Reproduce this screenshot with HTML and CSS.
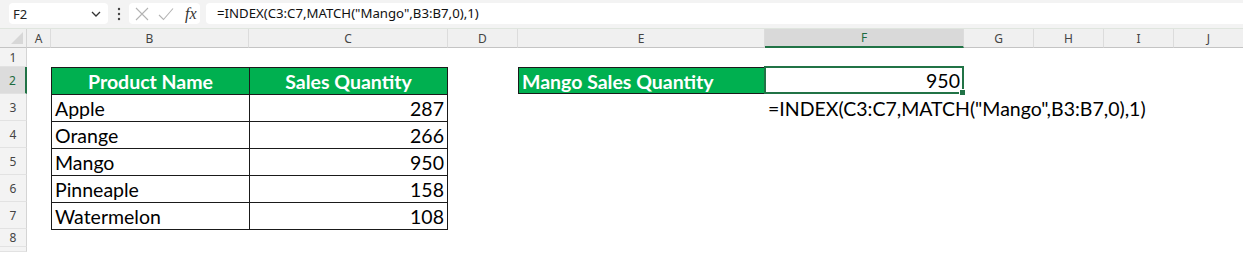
FILE: index.html
```html
<!DOCTYPE html>
<html lang="en">

<head>
    <meta charset="UTF-8">
    <meta name="viewport" content="width=device-width, initial-scale=1.0">
    <title>INDEX MATCH - Mango</title>
    <link rel="stylesheet" href="styles.css">
</head>

<body>
    <div class="app">
        <!-- formula bar -->
        <div class="formula-bar">
            <div class="name-box">
                <span>F2</span>
                <svg class="chevron" width="10" height="6" viewBox="0 0 10 6">
                    <path d="M1 1 L5 5 L9 1" fill="none" stroke="#333" stroke-width="1.3" />
                </svg>
            </div>
            <svg class="dots" width="4" height="14" viewBox="0 0 4 14">
                <circle cx="2" cy="2" r="1.2" fill="#444" />
                <circle cx="2" cy="7" r="1.2" fill="#444" />
                <circle cx="2" cy="12" r="1.2" fill="#444" />
            </svg>
            <div class="fx-box">
                <svg width="14" height="14" viewBox="0 0 14 14">
                    <path d="M1 1 L13 13 M13 1 L1 13" stroke="#b3b3b3" stroke-width="1.1" fill="none" />
                </svg>
                <svg width="16" height="14" viewBox="0 0 16 14">
                    <path d="M1 8 L5.5 12.5 L15 1.5" stroke="#b3b3b3" stroke-width="1.1" fill="none" />
                </svg>
                <span class="fx">fx</span>
            </div>
            <div class="formula-input">=INDEX(C3:C7,MATCH("Mango",B3:B7,0),1)</div>
        </div>

        <!-- sheet -->
        <div class="sheet">
            <div class="corner"></div>
            <div class="col-head">A</div>
            <div class="col-head">B</div>
            <div class="col-head">C</div>
            <div class="col-head">D</div>
            <div class="col-head">E</div>
            <div class="col-head active">F</div>
            <div class="col-head">G</div>
            <div class="col-head">H</div>
            <div class="col-head">I</div>
            <div class="col-head last">J</div>

            <div class="row-head">1</div>
            <div class="row-head active">2</div>
            <div class="row-head">3</div>
            <div class="row-head">4</div>
            <div class="row-head">5</div>
            <div class="row-head">6</div>
            <div class="row-head">7</div>
            <div class="row-head">8</div>
            <div class="row-head"></div>

            <div class="data-table">
                <div class="cell head">Product Name</div>
                <div class="cell head">Sales Quantity</div>
                <div class="cell">Apple</div>
                <div class="cell num">287</div>
                <div class="cell">Orange</div>
                <div class="cell num">266</div>
                <div class="cell">Mango</div>
                <div class="cell num">950</div>
                <div class="cell">Pinneaple</div>
                <div class="cell num">158</div>
                <div class="cell">Watermelon</div>
                <div class="cell num">108</div>
            </div>

            <div class="lookup-label">Mango Sales Quantity</div>
            <div class="lookup-value">950<span class="fill-handle"></span></div>
            <div class="formula-note">=INDEX(C3:C7,MATCH("Mango",B3:B7,0),1)</div>
        </div>
    </div>
</body>

</html>
```

FILE: styles.css
```css
html, body {
    margin: 0;
    padding: 0;
    background: #fff;
}

.app {
    width: 1243px;
    height: 253px;
    overflow: hidden;
    font-family: "Noto Sans", "Open Sans", sans-serif;
}

/* formula bar */
.formula-bar {
    height: 29px;
    background: #f3f3f3;
    border-bottom: 1px solid #dfe5de;
    display: flex;
    align-items: flex-start;
    padding: 3px 0 0 9px;
    box-sizing: border-box;
}

.name-box {
    width: 99px;
    height: 21px;
    background: #fff;
    border-radius: 4px;
    display: flex;
    align-items: center;
    justify-content: space-between;
    padding: 0 7px 0 4px;
    box-sizing: border-box;
    font-size: 13px;
    color: #222;
}

.dots {
    margin: 4px 8px 0 9px;
}

.fx-box {
    width: 71px;
    height: 21px;
    background: #fff;
    border-radius: 4px;
    display: flex;
    align-items: center;
    gap: 9px;
    padding-left: 6px;
    box-sizing: border-box;
}

.fx-box .fx {
    font-family: "Liberation Serif", "DejaVu Serif", serif;
    font-style: italic;
    font-size: 16px;
    color: #333;
    margin-left: 2px;
}

.formula-input {
    flex: 1;
    height: 21px;
    margin-left: 6px;
    background: #fff;
    border-radius: 4px 0 0 4px;
    padding-left: 11px;
    font-size: 13.2px;
    line-height: 21px;
    color: #111;
}

/* grid */
.sheet {
    display: grid;
    grid-template-columns: 27px 24px 198px 199px 70px 247px 199px 70px 70px 70px 1fr;
    grid-template-rows: 19px 19px repeat(6, 27px) 18px 1fr;
    height: 223px;
}

.corner {
    background: #f0f0f0;
    border-right: 1px solid #d4d4d4;
    border-bottom: 1px solid #c4c4c4;
    position: relative;
}

.corner::after {
    content: "";
    position: absolute;
    right: 3px;
    bottom: 3px;
    border-left: 12px solid transparent;
    border-bottom: 12px solid #d7d7d7;
}

.col-head {
    background: #f0f0f0;
    border-right: 1px solid #dcdcdc;
    border-bottom: 1px solid #c4c4c4;
    font-size: 12px;
    color: #444;
    display: flex;
    align-items: center;
    justify-content: center;
}

.col-head.active {
    background: #d9d9d9;
    color: #1d6b40;
    border-bottom: 2px solid #217346;
}

.col-head.last {
    grid-column: 11;
    border-right: none;
}

.row-head {
    grid-column: 1;
    background: #f3f3f3;
    border-right: 1px solid #d4d4d4;
    border-bottom: 1px solid #e2e2e2;
    font-size: 12px;
    color: #444;
    display: flex;
    align-items: center;
    justify-content: center;
}

.row-head.active {
    background: #dcdcdc;
    color: #1d6b40;
    border-right: 2px solid #217346;
}

/* cells */
.data-table,
.lookup-label,
.lookup-value,
.formula-note {
    font-family: Lato, "Liberation Sans", sans-serif;
    font-size: 19.5px;
    color: #000;
}

.data-table {
    grid-column: 3 / 5;
    grid-row: 3 / 9;
    align-self: start;
    display: grid;
    grid-template-columns: 198px 1fr;
    grid-auto-rows: 27px;
    border-left: 1px solid #1a1a1a;
    border-top: 1px solid #1a1a1a;
}

.cell {
    border-right: 1px solid #1a1a1a;
    border-bottom: 1px solid #1a1a1a;
    padding: 2px 3px 0;
    line-height: 24px;
    white-space: nowrap;
}

.cell.head {
    background: #00b050;
    color: #fff;
    font-weight: bold;
    text-align: center;
}

.cell.num {
    text-align: right;
}

.lookup-label {
    grid-column: 6;
    grid-row: 3;
    background: #00b050;
    color: #fff;
    font-weight: bold;
    border: 1px solid #1a1a1a;
    border-right: none;
    padding: 2px 0 0 3px;
    line-height: 23px;
    white-space: nowrap;
}

.lookup-value {
    grid-column: 7;
    grid-row: 3;
    border: 2px solid #217346;
    margin: -1px 0 0 -1px;
    text-align: right;
    padding: 1px 2px 0 0;
    line-height: 23px;
    position: relative;
}

.fill-handle {
    position: absolute;
    right: -4px;
    bottom: -4px;
    width: 5px;
    height: 5px;
    background: #217346;
    border: 1px solid #fff;
}

.formula-note {
    grid-column: 7 / 12;
    grid-row: 4;
    padding: 2px 0 0 3px;
    line-height: 25px;
    white-space: nowrap;
}
```
